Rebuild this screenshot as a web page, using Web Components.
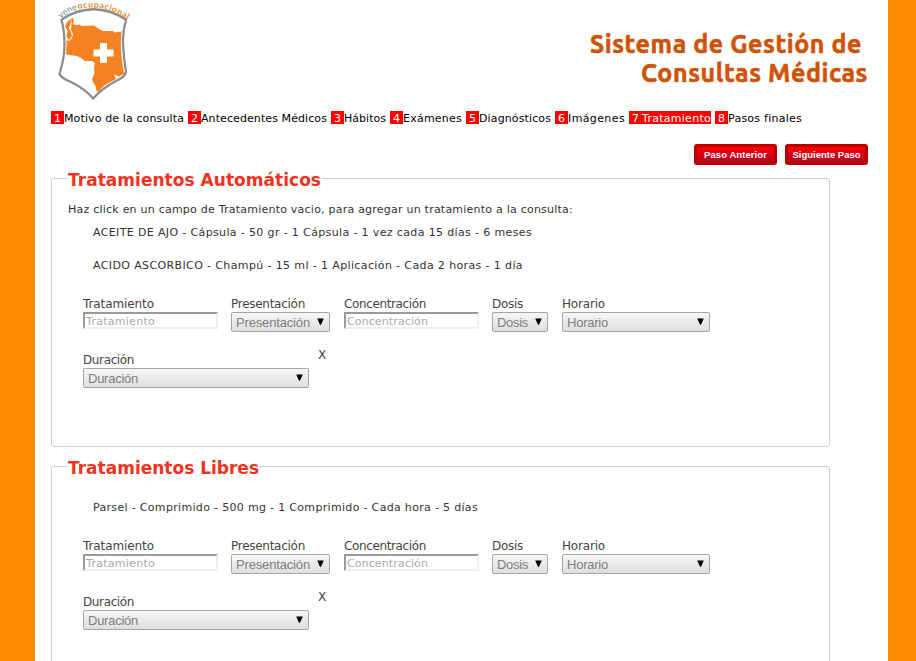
<!DOCTYPE html>
<html lang="es"><head><meta charset="utf-8"><title>Sistema de Gestión de Consultas Médicas</title>
<style>
html,body{margin:0;height:661px;overflow:hidden;background:#ff8c00;font-family:"DejaVu Sans",Verdana,sans-serif;font-size:11px;color:#333}
</style></head><body>
<medical-app></medical-app>
<script>
const define=(name,html,setup)=>customElements.define(name,class extends HTMLElement{
  connectedCallback(){
    if(this.shadowRoot)return;
    this.attachShadow({mode:'open'}).innerHTML=typeof html==='function'?html(this):html;
    if(setup)setup(this);
  }
});

/* Single line of text, tracked so that it spans the width given in "w". */
define('text-run','<style>:host{display:inline-block;white-space:nowrap;line-height:inherit}span{display:inline-block;white-space:pre}</style><span><slot></slot></span>',el=>{
  const w=parseFloat(el.getAttribute('w'));
  if(!w)return;
  const n=el.textContent.length,s=el.shadowRoot.querySelector('span');
  el.style.width=w+'px';
  s.style.letterSpacing=((w-s.getBoundingClientRect().width)/n)+'px';
});

define('brand-logo',`<style>:host{display:block;width:80px;height:103px}svg{display:block;overflow:visible}text{font:8.5px Lato,sans-serif}.b{font-weight:bold}</style>
<svg width="80" height="103" viewBox="0 0 80 103">
<defs><path id="arcA" d="M10 18.500Q18 11 29 8.700"/><path id="arcB" d="M27 9Q53 3.200 77 20"/></defs>
<path d="M10.500 19.500Q42 -1 75 19.500Q71.500 32 72 43Q72.500 57 75 72Q74 77 65 81Q50 89 42.300 98.500Q34 89 20 82Q10 78 8.500 74Q13.500 58 13.500 45Q13.500 31 10.500 19.500Z" fill="#fff" stroke="#8b8e91" stroke-width="2.300" stroke-linejoin="round"/>
<path d="M14 26L16 22L21 18L19.500 24L18 28L20 32L21 36L18 40L15.500 37L16.500 31Z" fill="#f58220"/>
<path d="M21 17.500L23 20L22 24L25 25L28 24.500L31 26L43 25.500L48 29L52 31L62 31L63 32.500L70.500 31.500Q69 46 71 60L73 74L68 76.500L63 74.500L65 79L54 85L47 92L45.500 91L44.500 86L42 82L41 79L43.500 73L43 68L44 63L41 61L34 61L30 58L26 56L15 54.500L15.500 45V40L18 41L21 38L22 34L20 30Z" fill="#f58220"/>
<path d="M49 43h7v6.500h6.500v7h-6.500v6.500h-7v-6.500h-6.500v-7h6.500z" fill="#fff"/>
<text fill="#75797c"><textPath href="#arcA" textLength="19" lengthAdjust="spacing">vene</textPath></text>
<text fill="#f58220" class="b"><textPath href="#arcB" textLength="52" lengthAdjust="spacing">ocupacional</textPath></text>
</svg>`);

define('app-header',`<style>
:host{display:flex;justify-content:space-between;height:103px;padding:0 20px 0 16px}
h1{margin:30px 0 0;font:bold 25px/29px Ubuntu,"Noto Sans",sans-serif;color:#cf5307;text-align:right;-webkit-text-stroke:.6px #cf5307}
h1 div:first-child{padding-right:6px}
</style><brand-logo></brand-logo><h1><div><text-run w="272">Sistema de Gestión de</text-run></div><div><text-run w="227">Consultas Médicas</text-run></div></h1>`);

define('step-link',el=>`<style>
:host{display:flex;height:13px;line-height:15px;color:#000}
b{font-weight:normal;background:#f00;color:#fff;width:13px;height:13px;text-align:center}
:host([active]){background:#f00;color:#fff}
</style><b>${el.getAttribute('n')}</b><slot></slot>`);

define('step-nav',`<style>:host{display:flex;gap:4px;padding:8px 16px 0}</style>
<step-link n="1"><text-run w="120">Motivo de la consulta</text-run></step-link>
<step-link n="2"><text-run w="126">Antecedentes Médicos</text-run></step-link>
<step-link n="3"><text-run w="42">Hábitos</text-run></step-link>
<step-link n="4"><text-run w="59">Exámenes</text-run></step-link>
<step-link n="5"><text-run w="72">Diagnósticos</text-run></step-link>
<step-link n="6"><text-run w="57">Imágenes</text-run></step-link>
<step-link n="7" active><text-run w="69">Tratamiento</text-run></step-link>
<step-link n="8"><text-run w="74">Pasos finales</text-run></step-link>`);

define('red-button',`<style>:host{display:block}
button{display:flex;justify-content:center;align-items:center;width:83px;height:21px;box-sizing:border-box;padding:0;border:3px solid #b80000;border-radius:3px;background:linear-gradient(#ff0000,#e00010 35%,#b60020);color:#fff;font:bold 9.5px/13px "Liberation Sans",Arial,sans-serif}
</style><button><slot></slot></button>`);

define('select-box',el=>`<style>:host{display:block}
div{display:flex;justify-content:space-between;align-items:center;box-sizing:border-box;width:${el.getAttribute('width')}px;height:20px;padding:1px 5px 0 4px;border:1px solid #a6a6a6;border-radius:2px;background:linear-gradient(#f6f6f6,#dedede);font:13px/18px "Liberation Sans",Arial,sans-serif;color:#808080}
svg{display:block;margin-top:-2px}
</style><div><slot></slot><svg width="7" height="7"><path d="M.2 .5H6.800L4 6.800H3Z" fill="#000"/></svg></div>`);

define('text-box',el=>`<style>:host{display:block}
div{box-sizing:border-box;width:135px;height:17px;border:2px solid;border-color:#9a9a9a #eee #eee #9a9a9a;padding-left:1px;line-height:15px;color:#a9a9a9;background:#fff}
</style><div><slot></slot></div>`);

define('form-field',el=>`<style>:host{display:block}
label{display:block;font-size:12px;line-height:16px;height:16px;color:#444}
</style><label><text-run w="${el.getAttribute('lw')}">${el.getAttribute('label')}</text-run></label><slot></slot>`);

define('treatment-form',`<style>:host{display:block;padding-left:15px}
.row{display:flex;height:56px}
.close{font-size:12px;line-height:14px;margin:-4px 0 0 9px;color:#444}
</style>
<div class="row">
<form-field label="Tratamiento" lw="71" style="width:148px"><text-box><text-run w="69">Tratamiento</text-run></text-box></form-field>
<form-field label="Presentación" lw="74" style="width:113px"><select-box width="99"><text-run w="74">Presentación</text-run></select-box></form-field>
<form-field label="Concentración" lw="82" style="width:148px"><text-box><text-run w="81">Concentración</text-run></text-box></form-field>
<form-field label="Dosis" lw="31" style="width:70px"><select-box width="56"><text-run w="31">Dosis</text-run></select-box></form-field>
<form-field label="Horario" lw="43"><select-box width="148"><text-run w="41">Horario</text-run></select-box></form-field>
</div>
<div class="row">
<form-field label="Duración" lw="51"><select-box width="226"><text-run w="50">Duración</text-run></select-box></form-field>
<div class="close">X</div>
</div>`);

define('field-group',el=>`<style>:host{display:block;margin-left:16px;width:779px}
fieldset{box-sizing:border-box;width:779px;height:279px;margin:0;padding:0 16px;border:1px solid #ccc;border-radius:3px}
legend{padding:0;font-weight:bold;font-size:17px;line-height:24px;height:20px;color:#ee3322}
</style><fieldset><legend><text-run w="${el.getAttribute('lw')}">${el.getAttribute('legend')}</text-run></legend><slot></slot></fieldset>`);

define('medical-app',`<style>
:host{display:block;box-sizing:border-box;width:853px;height:661px;margin-left:35px;background:#fff;overflow:hidden}
.actions{display:flex;justify-content:flex-end;gap:8px;padding:20px 20px 3px 0}
p{margin:0;height:16px;line-height:16px}
.item{padding-left:25px}
field-group{height:279px}
</style>
<app-header></app-header><step-nav></step-nav>
<div class="actions"><red-button><text-run w="63">Paso Anterior</text-run></red-button><red-button><text-run w="68">Siguiente Paso</text-run></red-button></div>
<field-group legend="Tratamientos Automáticos" lw="253">
<p style="padding-top:14px"><text-run w="505">Haz click en un campo de Tratamiento vacio, para agregar un tratamiento a la consulta:</text-run></p>
<p class="item" style="margin-top:7px"><text-run w="439">ACEITE DE AJO - Cápsula - 50 gr - 1 Cápsula - 1 vez cada 15 días - 6 meses</text-run></p>
<p class="item" style="margin:17px 0 22px"><text-run w="430">ACIDO ASCORBICO - Champú - 15 ml - 1 Aplicación - Cada 2 horas - 1 día</text-run></p>
<treatment-form></treatment-form></field-group>
<field-group legend="Tratamientos Libres" lw="191" style="margin-top:9px">
<p class="item" style="padding-top:24px;margin-bottom:22px"><text-run w="385">Parsel - Comprimido - 500 mg - 1 Comprimido - Cada hora - 5 días</text-run></p>
<treatment-form></treatment-form></field-group>`);
</script></body></html>
